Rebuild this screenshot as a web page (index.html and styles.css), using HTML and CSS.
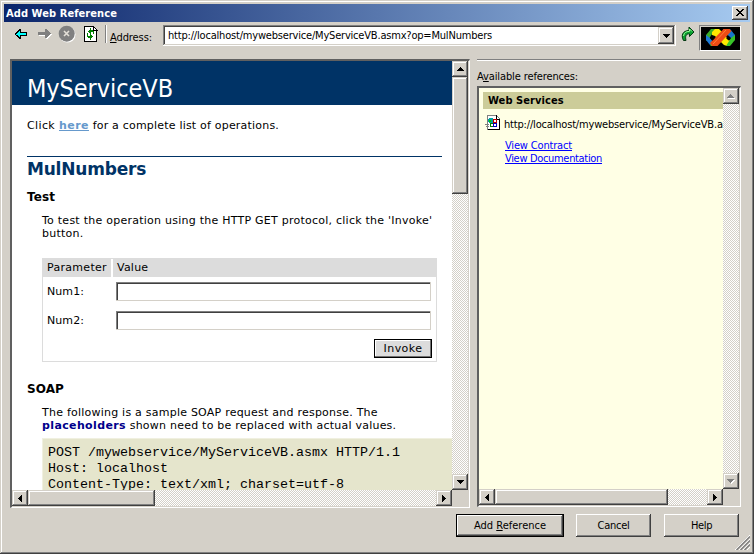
FILE: index.html
```html
<!DOCTYPE html>
<html lang="en">
<head>
<meta charset="utf-8">
<title>Add Web Reference</title>
<link rel="stylesheet" href="styles.css">
</head>
<body>
<div class="window">
  <header class="titlebar">
    <h1>Add Web Reference</h1>
    <button class="raised close" aria-label="Close"><svg width="8" height="7" shape-rendering="crispEdges"><path d="M0 0h2v1h1v1h2V1h1V0h2v1H7v1H6v1H5v1h1v1h1v1h1v1H6V6H5V5H3v1H2v1H0V6h1V5h1V4h1V3H2V2H1V1H0z"/></svg></button>
  </header>
  <div class="toolbar">
    <svg class="nav" width="92" height="20" shape-rendering="crispEdges">
      <path d="M1 9h1V8h1V7h1V6h1V5h2v3h6v4H7v3H5v-1H4v-1H3v-1H2v-1H1z"/>
      <path d="M2 9.500h1V9h1V8h1V7h1v2h6v2H6v2H5v-1H4v-1H3v-.5H2z" fill="#0ff"/>
      <path d="M25 9h7V6h2v1h1v1h1v1h1v1h1v1h-1v1h-1v1h-1v1h-1v1h-2v-3h-7z" fill="#fff"/>
      <path d="M24 8h7V5h2v1h1v1h1v1h1v1h1v1h-1v1h-1v1h-1v1h-1v1h-2v-3h-7z" fill="#808080"/>
      <circle cx="53.5" cy="10.5" r="8" fill="#fff" shape-rendering="auto"/>
      <circle cx="52.7" cy="9.700" r="8" fill="#808080" shape-rendering="auto"/>
      <path d="M50 7l5 5M55 7l-5 5" stroke="#e4e0d8" stroke-width="1.6" shape-rendering="auto"/>
      <path d="M70.500 2.500h9l3 3v12h-12z" fill="#fff" stroke="#000"/>
      <path d="M79.500 2v4h4" fill="none" stroke="#000"/>
      <path d="M76 4h1v2h2v1h1v3h-1V8h-2v2h-1V9h-1V8h-1V7h1V6h1zM73 9h1v3h2v-2h1v1h1v1h1v1h-1v1h-1v2h-1v-2h-2v-1h-1z" fill="#008000"/>
    </svg>
    <span class="sep"></span>
    <label class="address"><u>A</u>ddress:</label>
    <div class="sunken combo">
      <span>http://localhost/mywebservice/MyServiceVB.asmx?op=MulNumbers</span>
      <button class="raised drop" aria-label="Open list"><svg width="7" height="4" shape-rendering="crispEdges"><path d="M0 0h7v1H6v1H5v1H4v1H3V3H2V2H1V1H0z"/></svg></button>
    </div>
    <svg class="go" width="14" height="16" viewBox="0 0 14 16">
      <path d="M2.500 14.500C0 10 1 4.800 8 4.500V1l5 5-4.500 4.500V7.800C5 7.800 4 10 5 14.500z" fill="#0aa030" stroke="#053a12"/>
      <path d="M2.500 10C3 6.500 5 5.500 8.500 5.300V3L11 5.500" fill="none" stroke="#9f9"/>
    </svg>
    <div class="logo">
      <svg width="29" height="18" viewBox="0 0 29 18">
        <path d="M0 6L5 0h5L5 6.500 3.500 9 0 12z" fill="#3cae28"/>
        <path d="M6 3L9 0h4l4 4 8 9-4 4-3-1-9-9-3-1z" fill="#ffe800"/>
        <path d="M0 6l4 3 3 4-3 3-4-5z" fill="#1d7bd8"/>
        <path d="M4 16l2-4h4v5H5z" fill="#52c832"/>
        <path d="M17 0h7l5 6v5l-4-1-6-7z" fill="#1876cc"/>
        <path d="M20 17l5-8 4-3v5l-5 6z" fill="#38c428"/>
        <path d="M4 14L17.500 0h6l2 2-14 15H6z" fill="#ed4b14"/>
        <path d="M7 15L20 1" stroke="#ff8038"/>
        <path d="M6.500 6.500L9 9l-2.500 2.500L4 9zM22.500 6.500L25 9l-2.500 2.500L20 9z"/>
      </svg>
    </div>
  </div>
  <main class="panes">
    <section class="pane service">
      <div class="view page">
        <div class="banner">MyServiceVB</div>
        <div class="content">
          <p class="intro"><span>Click </span><a href="#">here</a><span> for a complete list of operations.</span></p>
          <h2>MulNumbers</h2>
          <h3 class="test">Test</h3>
          <p class="desc howto">To test the operation using the HTTP GET protocol, click the 'Invoke'<br>button.</p>
          <div class="params">
            <div class="head pname">Parameter</div><div class="head">Value</div>
            <label>Num1:</label><input>
            <label>Num2:</label><input>
            <button class="invoke">Invoke</button>
          </div>
          <h3 class="soap">SOAP</h3>
          <p class="desc sample">The following is a sample SOAP request and response. The<br><b>placeholders</b> shown need to be replaced with actual values.</p>
          <pre>POST /mywebservice/MyServiceVB.asmx HTTP/1.1
Host: localhost
Content-Type: text/xml; charset=utf-8</pre>
        </div>
      </div>
      <div class="vbar">
        <i class="raised btn"><svg width="7" height="4" shape-rendering="crispEdges"><path d="M3 0h1v1h1v1h1v1h1v1H0V3h1V2h1V1h1z"/></svg></i>
        <i class="raised thumb"></i>
        <i class="raised btn end"><svg width="7" height="4" shape-rendering="crispEdges"><path d="M0 0h7v1H6v1H5v1H4v1H3V3H2V2H1V1H0z"/></svg></i>
      </div>
      <div class="hbar">
        <i class="raised btn"><svg width="4" height="7" shape-rendering="crispEdges"><path d="M4 0v7H3V6H2V5H1V4H0V3h1V2h1V1h1V0z"/></svg></i>
        <i class="raised thumb"></i>
        <i class="raised btn end"><svg width="4" height="7" shape-rendering="crispEdges"><path d="M0 0h1v1h1v1h1v1h1v1H3v1H2v1H1v1H0z"/></svg></i>
      </div>
    </section>
    <section class="refs">
      <label class="available">A<u>v</u>ailable references:</label>
      <div class="pane list">
        <div class="view tree">
          <div class="group">Web Services</div>
          <div class="entry">
            <svg width="16" height="16" shape-rendering="crispEdges">
              <path d="M2.500 .5h9l3 3v11h-12z" fill="#fff" stroke="#808080"/>
              <path d="M11.500 0v4h3v10.500H3" fill="none" stroke="#000"/>
              <path d="M0 9.500h4M1 11.500h3" stroke="#808080"/>
              <circle cx="6" cy="5.500" r="3" fill="#00a0a0"/><path d="M4 5h2v2H4z" fill="#0c0"/>
              <path d="M8.500 4.500h3v3h-3z" fill="#fff" stroke="#c00000"/>
              <path d="M5.500 8.500h3v3h-3z" fill="#fff" stroke="#008000"/>
              <path d="M8.500 8.500h3v3h-3z" fill="#fff" stroke="#0000c0"/>
            </svg>
            <span>http://localhost/mywebservice/MyServiceVB.a</span>
          </div>
          <div class="links"><a class="contract" href="#">View Contract</a><a class="docs" href="#">View Documentation</a></div>
        </div>
        <div class="vbar off">
          <i class="raised btn"><svg width="8" height="5" shape-rendering="crispEdges"><path d="M1 4h7v1H1z" fill="#fff"/><path d="M3 0h1v1h1v1h1v1h1v1H0V3h1V2h1V1h1z" fill="#808080"/></svg></i>
          <i class="raised btn end"><svg width="8" height="5" shape-rendering="crispEdges"><path d="M1 1h7v1H7v1H6v1H5v1H4V4H3V3H2V2H1z" fill="#fff"/><path d="M0 0h7v1H6v1H5v1H4v1H3V3H2V2H1V1H0z" fill="#808080"/></svg></i>
        </div>
        <div class="hbar">
          <i class="raised btn"><svg width="4" height="7" shape-rendering="crispEdges"><path d="M4 0v7H3V6H2V5H1V4H0V3h1V2h1V1h1V0z"/></svg></i>
          <i class="raised thumb"></i>
          <i class="raised btn end"><svg width="4" height="7" shape-rendering="crispEdges"><path d="M0 0h1v1h1v1h1v1h1v1H3v1H2v1H1v1H0z"/></svg></i>
        </div>
      </div>
    </section>
  </main>
  <footer class="actions">
    <div class="default"><button class="raised action">Add <u>R</u>eference</button></div>
    <button class="raised action cancel">Cancel</button>
    <button class="raised action help">Help</button>
  </footer>
  <svg class="grip" width="16" height="16"><path d="M1 16L16 1M5 16L16 5M9 16L16 9M13 16l3-3" stroke="#fff"/><path d="M2.500 16L16 2.500M6.500 16L16 6.500M10.500 16l5.500-5.500" stroke="#808080" stroke-width="1.500"/></svg>
</div>
</body>
</html>
```
FILE: styles.css
```css
* { box-sizing: border-box; }
body {
  margin: 0;
  font: 11px/13px "DejaVu Sans Condensed", "DejaVu Sans", sans-serif;
  color: #000;
  overflow: hidden;
}
h1, h2, h3, p, pre { margin: 0; }
button, input { font: inherit; color: inherit; padding: 0; margin: 0; border: 0; border-radius: 0; outline: 0; }
svg { display: block; flex: none; }
u { text-decoration: underline; text-underline-offset: 1px; text-decoration-thickness: 1px; text-decoration-skip-ink: none; }
a { text-underline-offset: 1px; text-decoration-thickness: 1px; text-decoration-skip-ink: none; }

.window {
  position: relative;
  width: 754px;
  height: 554px;
  padding: 4px;
  background: #d4d0c8;
  box-shadow: inset -1px -1px #404040, inset 1px 1px #d4d0c8, inset -2px -2px #808080, inset 2px 2px #fff;
}
.raised {
  display: flex;
  align-items: center;
  justify-content: center;
  background: #d4d0c8;
  box-shadow: inset -1px -1px #404040, inset 1px 1px #d4d0c8, inset -2px -2px #808080, inset 2px 2px #fff;
}
.sunken {
  background: #fff;
  box-shadow: inset -1px -1px #fff, inset 1px 1px #808080, inset -2px -2px #d4d0c8, inset 2px 2px #404040;
}

.titlebar {
  display: flex;
  align-items: center;
  justify-content: space-between;
  height: 18px;
  padding: 0 2px;
  background: linear-gradient(90deg, #0a246a, #a6caf0);
}
.titlebar h1 { font-size: 11px; line-height: 13px; letter-spacing: .08px; color: #fff; }
.close { width: 16px; height: 14px; padding: 0 1px 1px 0; box-shadow: inset -1px -1px #404040, inset 1px 1px #fff, inset -2px -2px #808080; }

.toolbar { display: flex; align-items: flex-start; height: 37px; padding: 2px 9px 0 10px; }
.sep { width: 2px; height: 18px; margin: 1px 3px 0 -1px; border-left: 1px solid #808080; border-right: 1px solid #fff; }
.address { margin-top: 7px; width: 53px; letter-spacing: -.09px; white-space: nowrap; }
.combo { display: flex; justify-content: space-between; width: 513px; height: 21px; margin-top: 1px; padding: 2px 2px 2px 5px; }
.combo span { line-height: 17px; letter-spacing: -.193px; white-space: nowrap; }
.drop { width: 16px; height: 17px; }
.go { margin: 2px 0 0 5px; }
.logo { width: 42px; height: 26px; margin: 1px 0 0 4px; padding: 3px 0 0 6px; background: #000; border: 1px solid; border-color: #808080 #fff #fff #808080; box-shadow: inset 1px 1px #d4d0c8; }

.panes { display: flex; height: 449px; padding: 0 9px 0 6px; }
.pane {
  display: grid;
  grid-template-columns: 1fr 16px;
  grid-template-rows: 1fr 16px;
  border: solid;
  border-width: 2px 1px 1px 2px;
  border-color: #606060 #fff #fff #606060;
  padding: 0 1px 1px 0;
}
.service { width: 460px; margin-right: 7px; }
.view { overflow: hidden; min-width: 0; min-height: 0; }
.page { background: #fff; font-family: "DejaVu Sans", sans-serif; letter-spacing: .23px; white-space: nowrap; }
.banner { height: 44px; padding: 13px 0 0 15px; background: #036; color: #fff; font: 25px/29px "DejaVu Sans Condensed", sans-serif; letter-spacing: -.06px; }
.content { padding: 14px 0 0 15px; }
.intro { letter-spacing: .2px; white-space: pre; }
.intro a { color: #69c; font-weight: bold; letter-spacing: .45px; }
.intro span:first-child { letter-spacing: .38px; }
h2 { margin: 24px 10px 0 0; padding-top: 2px; height: 22px; border-top: 1px solid #036; color: #036; font-size: 17px; line-height: 20px; letter-spacing: -.2px; }
h3 { font-size: 12px; line-height: 14px; letter-spacing: .1px; }
.test { margin-top: 12px; }
.desc { padding-left: 15px; }
.howto { margin-top: 10px; letter-spacing: .245px; }
.params {
  display: grid;
  grid-template-columns: 73px 320px;
  grid-template-rows: 18px 29px 29px 27px;
  align-items: center;
  width: 395px;
  height: 104px;
  margin: 18px 0 0 15px;
  border: 1px solid #dcdcdc;
}
.head { height: 18px; background: #dcdcdc; line-height: 18px; }
.pname { padding-left: 4px; width: 68px; letter-spacing: .3px; }
.params .head + .head { margin-left: -3px; width: 323px; padding-left: 4px; }
.params label { padding-left: 4px; letter-spacing: .08px; }
.params input { width: 315px; height: 19px; background: #fff; box-shadow: inset -1px -1px #d4d0c8, inset 1px 1px #808080, inset 2px 2px #404040; }
.invoke { grid-column: 2; width: 58px; height: 19px; margin-left: 258px; background: #dcdcdc; border: 1px solid #000; box-shadow: inset -1px -1px #707070, inset 1px 1px #fff; letter-spacing: .46px; }
.soap { margin-top: 20px; }
.sample { margin-top: 10px; }
.sample b { color: #00008b; letter-spacing: .37px; }
pre { height: 60px; margin: 6px 0 0 15px; padding: 6px 5px 0; background: #e5e5cc; border: 1px solid #f0f0e0; border-right: 0; font: 13.333px/16px "Liberation Mono", monospace; letter-spacing: 0; }

.vbar, .hbar { display: flex; background: repeating-conic-gradient(#d4d0c8 0 25%, #fff 0 50%) 0 0 / 2px 2px; }
.vbar { flex-direction: column; }
.btn { width: 16px; height: 16px; flex: none; }
.vbar .end { margin-top: auto; }
.hbar .end { margin-left: auto; }
.service .vbar .thumb { height: 117px; }
.service .hbar .thumb { width: 127px; }
.list .hbar .thumb { width: 173px; }

.refs { display: flex; flex-direction: column; width: 264px; border-top: 1px solid #808080; box-shadow: inset 0 1px #fff; }
.available { height: 13px; margin: 10px 0 3px; letter-spacing: -.12px; }
.list { width: 264px; height: 421px; }
.tree { background: #ffffe5; padding: 4px 0 0 4px; white-space: nowrap; }
.group { height: 17px; padding-left: 5px; background: #cc9; font-weight: bold; line-height: 17px; letter-spacing: .08px; }
.entry { display: flex; height: 30px; padding: 6px 0 0 2px; letter-spacing: -.18px; }
.entry span { margin: 3px 0 0 3px; }
.links { display: flex; flex-direction: column; align-items: flex-start; padding-left: 22px; }
.links a { color: #00f; }
.contract { letter-spacing: -.167px; }
.docs { letter-spacing: -.327px; }

.actions { display: flex; align-items: flex-start; height: 42px; padding: 6px 11px 0 452px; }
.default { width: 108px; height: 23px; padding: 1px; margin-right: 12px; background: #000; }
.default .action { width: 106px; height: 21px; }
.action { display: block; height: 23px; text-align: center; line-height: 19px; box-shadow: inset -1px -1px #404040, inset 1px 1px #fff, inset -2px -2px #808080; }
.cancel { width: 75px; margin-right: 13px; letter-spacing: -.25px; }
.help { width: 75px; letter-spacing: -.35px; }
.grip { position: absolute; right: 4px; bottom: 4px; }
```
